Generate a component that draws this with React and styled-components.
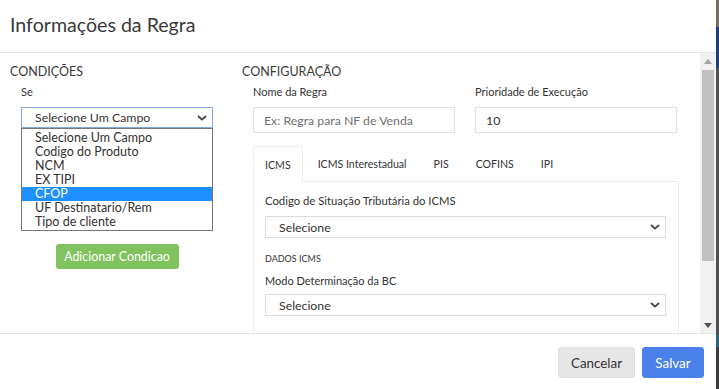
import React from "react";
import styled, { createGlobalStyle } from "styled-components";

const GlobalStyle = createGlobalStyle`
  *, *::before, *::after { box-sizing: border-box; }
  html, body { margin: 0; padding: 0; background: #fff; }
  body {
    font-family: Lato, "Open Sans", "Liberation Sans", sans-serif;
    color: #333;
  }
`;

const Screen = styled.div`
  display: flex;
  width: 719px;
  height: 389px;
  overflow: hidden;
`;

const Modal = styled.div`
  width: 716px;
  display: flex;
  flex-direction: column;
  background: #fff;
`;

const Backdrop = styled.div`
  flex: 1;
  background: linear-gradient(
    to bottom,
    #786e69 0 27px,
    #223d7c 27px 68px,
    #4f5153 68px 335px,
    #2c6776 335px 347px,
    #3a3c3e 347px
  );
`;

const Header = styled.div`
  height: 53px;
  border-bottom: 1px solid #e5e5e5;
  display: flex;
  align-items: center;
  padding: 0 10px 3px;
`;

const Title = styled.h4`
  margin: 0;
  font-size: 19.6px;
  font-weight: 400;
  line-height: 24px;
  color: #3a3a3a;
`;

const Body = styled.div`
  display: flex;
  height: 280px;
`;

const Content = styled.div`
  flex: 1;
  display: grid;
  grid-template-columns: 242px 1fr;
  align-items: start;
  padding-top: 11px;
  overflow: hidden;
`;

const Column = styled.div`
  display: flex;
  flex-direction: column;
  padding-left: ${(p) => p.$pad || 0}px;
`;

const SectionTitle = styled.div`
  font-size: 12.5px;
  line-height: 16px;
  margin-bottom: 5px;
  color: #3a3a3a;
`;

const Group = styled.div`
  margin-left: 11px;
  width: ${(p) => p.$width}px;
  display: flex;
  flex-direction: column;
`;

const Label = styled.div`
  font-size: ${(p) => p.$size || 11}px;
  line-height: 14px;
  margin-bottom: ${(p) => (p.$gap != null ? p.$gap : 8)}px;
  color: #333;
  white-space: nowrap;
`;

const SelectBox = styled.div`
  height: ${(p) => p.$h}px;
  border: 1px solid ${(p) => (p.$focus ? "#84a9e0" : "#dcdcdc")};
  display: flex;
  align-items: center;
  justify-content: space-between;
  padding: 0 5px 0 13px;
  font-size: 12.3px;
  color: #333;
  background: #fff;
`;

const DropList = styled.div`
  border: 1px solid #767676;
  padding: 1.5px 0 1px;
  background: #fff;
`;

const Option = styled.div`
  height: 14.1px;
  line-height: 13px;
  padding-left: 13px;
  font-size: 12.5px;
  color: ${(p) => (p.$active ? "#fff" : "#333")};
  background: ${(p) => (p.$active ? "#1e90ff" : "transparent")};
  white-space: nowrap;
`;

const AddButton = styled.button`
  margin: 12.5px auto 0;
  width: 123px;
  height: 25px;
  border: none;
  border-radius: 3px;
  background: #80c25e;
  color: #fff;
  font-family: inherit;
  font-size: 12.4px;
  padding: 0;
`;

const FieldsGrid = styled.div`
  margin-left: 11px;
  display: grid;
  grid-template-columns: 202px 202px;
  column-gap: 20px;
`;

const Input = styled.input`
  width: 100%;
  height: 26px;
  border: 1px solid #e0e0e0;
  padding: 0 10px;
  font-family: inherit;
  font-size: 12.3px;
  color: #333;
  outline: none;
  &::placeholder {
    color: #707070;
  }
`;

const Tabs = styled.div`
  margin: 13px 0 0 11px;
  width: 426px;
`;

const TabBar = styled.div`
  display: flex;
  height: 36px;
  border-bottom: 1px solid #ebebeb;
`;

const Tab = styled.div`
  display: flex;
  align-items: center;
  padding: 0 11px;
  margin-right: 3px;
  font-size: 10.6px;
  color: #333;
  border: 1px solid ${(p) => (p.$active ? "#ebebeb" : "transparent")};
  border-bottom: none;
  border-radius: 3px 3px 0 0;
  background: #fff;
  margin-bottom: ${(p) => (p.$active ? "-1px" : "0")};
  white-space: nowrap;
`;

const Pane = styled.div`
  border: 1px solid #ebebeb;
  border-top: none;
  padding: 12px 12px 20px 11px;
  height: 160px;
`;

const SubTitle = styled.div`
  font-size: 9px;
  line-height: 12px;
  margin: 15px 0 9px;
  color: #333;
`;

const ScrollTrack = styled.div`
  width: 16px;
  background: #f1f1f1;
  display: flex;
  flex-direction: column;
  align-items: center;
`;

const ArrowButton = styled.div`
  height: 16px;
  width: 16px;
  display: flex;
  align-items: center;
  justify-content: center;
`;

const Thumb = styled.div`
  width: 12px;
  height: 191px;
  margin-top: 1px;
  background: #c1c1c1;
`;

const Spacer = styled.div`
  flex: 1;
`;

const Footer = styled.div`
  height: 56px;
  border-top: 1px solid #e5e5e5;
  display: flex;
  justify-content: flex-end;
  align-items: flex-start;
  gap: 7px;
  padding: 13px 12px 0;
`;

const FooterButton = styled.button`
  height: 31px;
  width: ${(p) => p.$width}px;
  padding: 0;
  border-radius: 3px;
  border: 1px solid ${(p) => (p.$primary ? "#4a80ea" : "#dedede")};
  background: ${(p) => (p.$primary ? "#4a80ea" : "#e6e6e6")};
  color: ${(p) => (p.$primary ? "#fff" : "#333")};
  font-family: inherit;
  font-size: 13.4px;
`;

const Chevron = () => (
  <svg width="10" height="6" viewBox="0 0 10 6">
    <polyline points="1,1 5,4.6 9,1" fill="none" stroke="#444" strokeWidth="1.8" />
  </svg>
);

const Select = ({ children, h = 22, focus }) => (
  <SelectBox $h={h} $focus={focus}>
    <span>{children}</span>
    <Chevron />
  </SelectBox>
);

const fieldOptions = [
  "Selecione Um Campo",
  "Codigo do Produto",
  "NCM",
  "EX TIPI",
  "CFOP",
  "UF Destinatario/Rem",
  "Tipo de cliente",
];

const tabs = ["ICMS", "ICMS Interestadual", "PIS", "COFINS", "IPI"];

export default function App() {
  return (
    <>
      <GlobalStyle />
      <Screen>
        <Modal>
          <Header>
            <Title>Informações da Regra</Title>
          </Header>
          <Body>
            <Content>
              <Column $pad={10}>
                <SectionTitle>CONDIÇÕES</SectionTitle>
                <Group $width={192}>
                  <Label>Se</Label>
                  <Select h={21} focus>
                    Selecione Um Campo
                  </Select>
                  <DropList>
                    {fieldOptions.map((o) => (
                      <Option key={o} $active={o === "CFOP"}>
                        {o}
                      </Option>
                    ))}
                  </DropList>
                  <AddButton>Adicionar Condicao</AddButton>
                </Group>
              </Column>
              <Column>
                <SectionTitle>CONFIGURAÇÃO</SectionTitle>
                <FieldsGrid>
                  <div>
                    <Label>Nome da Regra</Label>
                    <Input placeholder="Ex: Regra para NF de Venda" readOnly />
                  </div>
                  <div>
                    <Label>Prioridade de Execução</Label>
                    <Input defaultValue="10" readOnly />
                  </div>
                </FieldsGrid>
                <Tabs>
                  <TabBar>
                    {tabs.map((t, i) => (
                      <Tab key={t} $active={i === 0}>
                        {t}
                      </Tab>
                    ))}
                  </TabBar>
                  <Pane>
                    <Label $size={11.3}>Codigo de Situação Tributária do ICMS</Label>
                    <Select>Selecione</Select>
                    <SubTitle>DADOS ICMS</SubTitle>
                    <Label $gap={6}>Modo Determinação da BC</Label>
                    <Select>Selecione</Select>
                  </Pane>
                </Tabs>
              </Column>
            </Content>
            <ScrollTrack>
              <ArrowButton>
                <svg width="8" height="5" viewBox="0 0 8 5">
                  <polygon points="0,5 4,0 8,5" fill="#a3a3a3" />
                </svg>
              </ArrowButton>
              <Thumb />
              <Spacer />
              <ArrowButton>
                <svg width="8" height="5" viewBox="0 0 8 5">
                  <polygon points="0,0 8,0 4,5" fill="#505050" />
                </svg>
              </ArrowButton>
            </ScrollTrack>
          </Body>
          <Footer>
            <FooterButton $width={77}>Cancelar</FooterButton>
            <FooterButton $primary $width={62}>
              Salvar
            </FooterButton>
          </Footer>
        </Modal>
        <Backdrop />
      </Screen>
    </>
  );
}
